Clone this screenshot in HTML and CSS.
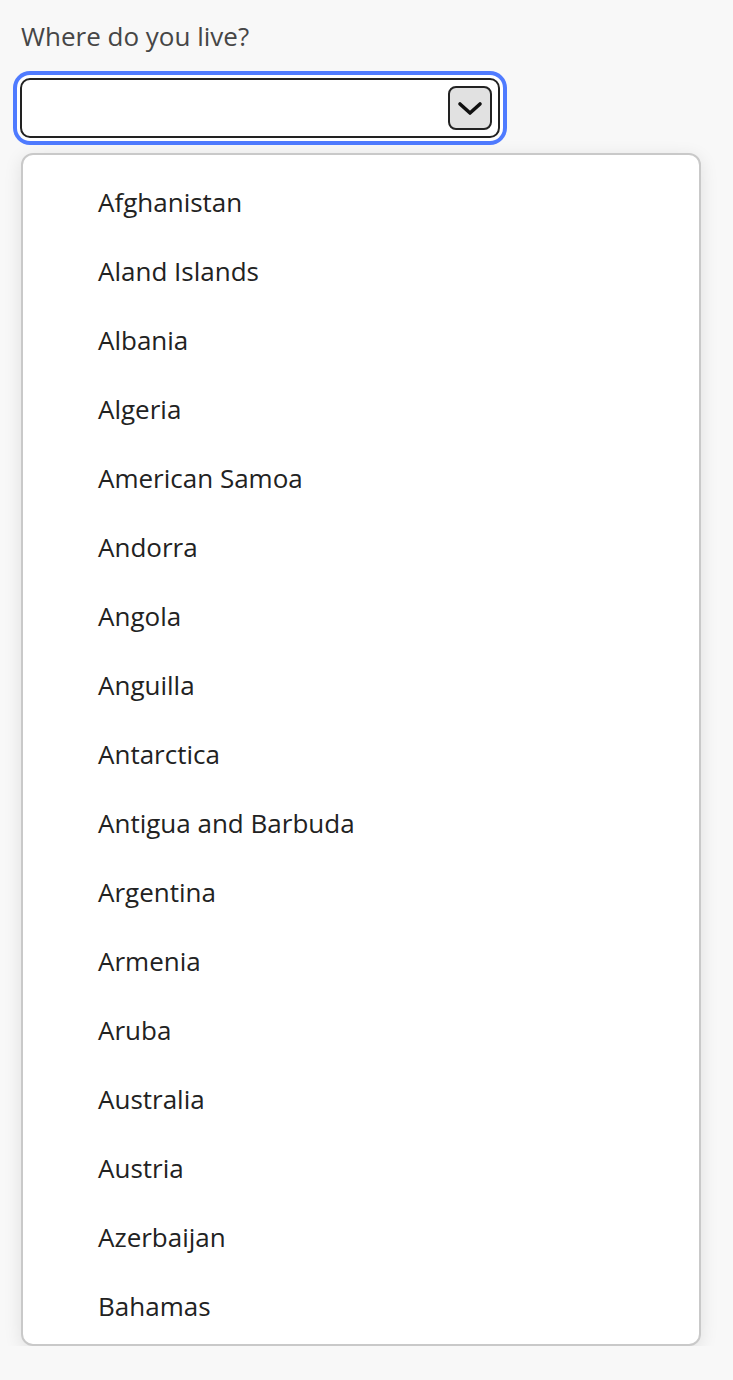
FILE: index.html
```html
<!DOCTYPE html>
<html lang="en">
<head>
<meta charset="utf-8">
<title>Where do you live?</title>
<link rel="stylesheet" href="styles.css">
</head>
<body>
<div class="field">
  <label class="label" for="country">Where do you live?</label>
  <div class="combo">
    <input class="combo-input" id="country" type="text">
    <button class="combo-btn" type="button" aria-label="Show options">
      <svg width="26" height="26" viewBox="0 0 26 26"><path d="M3 9 L13 18 L23 9" fill="none" stroke="#111" stroke-width="3.6" stroke-linecap="round" stroke-linejoin="round"/></svg>
    </button>
  </div>
  <ul class="listbox" role="listbox">
    <li class="option">Afghanistan</li>
    <li class="option">Aland Islands</li>
    <li class="option">Albania</li>
    <li class="option">Algeria</li>
    <li class="option">American Samoa</li>
    <li class="option">Andorra</li>
    <li class="option">Angola</li>
    <li class="option">Anguilla</li>
    <li class="option">Antarctica</li>
    <li class="option">Antigua and Barbuda</li>
    <li class="option">Argentina</li>
    <li class="option">Armenia</li>
    <li class="option">Aruba</li>
    <li class="option">Australia</li>
    <li class="option">Austria</li>
    <li class="option">Azerbaijan</li>
    <li class="option">Bahamas</li>
  </ul>
</div>
</body>
</html>
```
FILE: styles.css
```css
html, body {
  margin: 0;
  padding: 0;
  background: #f8f8f8;
}
body {
  font-family: "Open Sans", "Noto Sans", sans-serif;
  color: #222;
}
.field {
  padding: 18px 0 0 20px;
  display: flex;
  flex-direction: column;
  align-items: flex-start;
}
.label {
  font-size: 26px;
  line-height: 36px;
  color: #464646;
  padding-left: 1px;
}
.combo {
  margin-top: 24px;
  width: 480px;
  height: 60px;
  box-sizing: border-box;
  border: 2px solid #222;
  border-radius: 10px;
  background: #fff;
  box-shadow: 0 0 0 3px #fff, 0 0 0 7px #4f7bff;
  display: flex;
  align-items: center;
  padding: 0 6px 0 10px;
}
.combo-input {
  flex: 1;
  border: none;
  outline: none;
  background: transparent;
  font: inherit;
  font-size: 26px;
  min-width: 0;
}
.combo-btn {
  width: 44px;
  height: 44px;
  box-sizing: border-box;
  border: 2px solid #222;
  border-radius: 8px;
  background: #e1e1e1;
  padding: 0;
  display: flex;
  align-items: center;
  justify-content: center;
}
.listbox {
  list-style: none;
  margin: 15px 0 0 1px;
  padding: 12px 0 4px;
  width: 680px;
  box-sizing: border-box;
  background: #fff;
  border: 2px solid #c9c9c9;
  border-radius: 12px;
  box-shadow: 0 4px 18px rgba(0, 0, 0, 0.1);
}
.option {
  height: 69px;
  display: flex;
  align-items: center;
  padding-left: 75px;
  font-size: 26px;
  color: #222;
}
```
